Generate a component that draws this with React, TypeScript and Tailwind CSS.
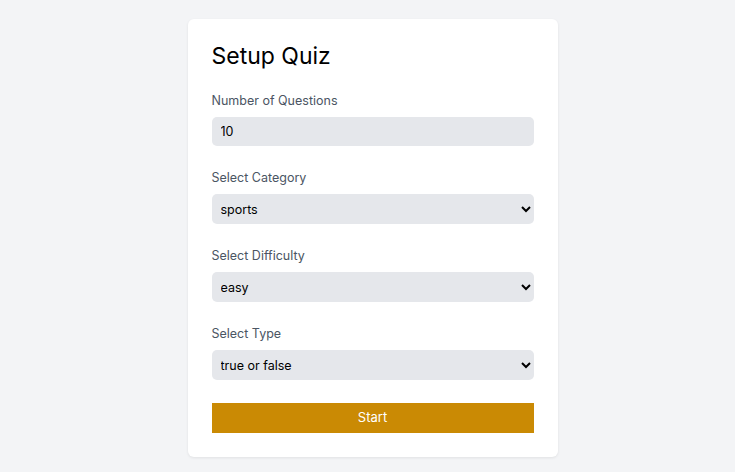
import { useState } from 'react';

const labelClass = 'block text-[12.5px] leading-[20px] text-[#4b5563]';
const selectClass =
  'mt-[6px] block w-full h-[30px] rounded-[5px] bg-[#e5e7eb] px-[5px] text-[12.5px] text-black outline-none';

export default function App() {
  const [amount, setAmount] = useState('10');
  const [category, setCategory] = useState('sports');
  const [difficulty, setDifficulty] = useState('easy');
  const [type, setType] = useState('boolean');

  return (
    <div className="min-h-[472px] bg-[#f3f4f6] font-['Inter',sans-serif]">
      <div className="flex justify-center pl-[10px] pt-[19px]">
        <form
          className="w-[370px] rounded-[6px] bg-white px-6 pt-[21px] pb-6 shadow-[0_1px_3px_rgba(0,0,0,0.08)]"
          onSubmit={(e) => e.preventDefault()}
        >
          <h2 className="text-[23px] leading-[32px] font-normal text-black">Setup Quiz</h2>

          {/* amount */}
          <div className="mt-[19px]">
            <label className={labelClass}>Number of Questions</label>
            <input
              type="number"
              value={amount}
              onChange={(e) => setAmount(e.target.value)}
              className="mt-[6px] block h-[29px] w-full rounded-[5px] bg-[#e5e7eb] px-[9px] text-[12.5px] text-black outline-none"
            />
          </div>

          {/* category */}
          <div className="mt-[22px]">
            <label className={labelClass}>Select Category</label>
            <select value={category} onChange={(e) => setCategory(e.target.value)} className={selectClass}>
              <option value="sports">sports</option>
              <option value="history">history</option>
              <option value="politics">politics</option>
            </select>
          </div>

          {/* difficulty */}
          <div className="mt-[22px]">
            <label className={labelClass}>Select Difficulty</label>
            <select value={difficulty} onChange={(e) => setDifficulty(e.target.value)} className={selectClass}>
              <option value="easy">easy</option>
              <option value="medium">medium</option>
              <option value="hard">hard</option>
            </select>
          </div>

          {/* type */}
          <div className="mt-[22px]">
            <label className={labelClass}>Select Type</label>
            <select value={type} onChange={(e) => setType(e.target.value)} className={selectClass}>
              <option value="boolean">true or false</option>
              <option value="multiple">multiple choice</option>
            </select>
          </div>

          <button
            type="submit"
            className="mt-[23px] block h-[30px] w-full bg-[#ca8a04] text-[13px] text-white"
          >
            Start
          </button>
        </form>
      </div>
    </div>
  );
}
